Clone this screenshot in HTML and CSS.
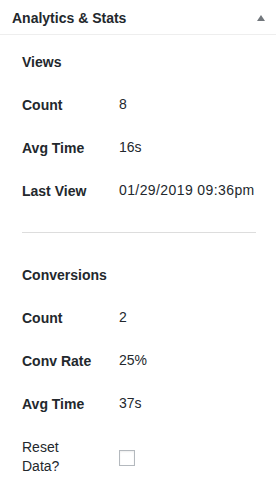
FILE: index.html
```html
<!DOCTYPE html>
<html>
<head>
<meta charset="utf-8">
<link rel="stylesheet" href="styles.css">
</head>
<body>
<div class="box">
  <div class="box-head">
    <h2 class="box-title">Analytics &amp; Stats</h2>
    <span class="toggle"></span>
  </div>
  <div class="box-body">
    <div class="row"><div class="section">Views</div></div>
    <div class="row"><div class="label">Count</div><div class="value">8</div></div>
    <div class="row"><div class="label">Avg Time</div><div class="value">16s</div></div>
    <div class="row"><div class="label">Last View</div><div class="value date">01/29/2019 09:36pm</div></div>
    <hr class="sep">
    <div class="row"><div class="section">Conversions</div></div>
    <div class="row"><div class="label">Count</div><div class="value">2</div></div>
    <div class="row"><div class="label">Conv Rate</div><div class="value">25%</div></div>
    <div class="row"><div class="label">Avg Time</div><div class="value">37s</div></div>
    <div class="row row-reset"><div class="label plain">Reset<br>Data?</div><div class="value"><span class="checkbox"></span></div></div>
  </div>
</div>
</body>
</html>
```

FILE: styles.css
```css
html, body {
  margin: 0;
  padding: 0;
  background: #fff;
}
body {
  font-family: "Liberation Sans", Arial, sans-serif;
  font-size: 14px;
  color: #23282d;
  width: 276px;
  height: 502px;
  overflow: hidden;
}
.box-head {
  height: 34px;
  border-bottom: 1px solid #eeeeee;
  display: flex;
  align-items: center;
  justify-content: space-between;
  padding: 0 12px 0 12px;
}
.box-title {
  margin: 0;
  font-size: 14px;
  font-weight: bold;
  line-height: 1;
  color: #23282d;
  position: relative;
  top: 1px;
}
.toggle {
  width: 0;
  height: 0;
  border-left: 4px solid transparent;
  border-right: 4px solid transparent;
  border-bottom: 6px solid #72777c;
  margin-right: -1px;
  position: relative;
  top: 1px;
}
.box-body {
  padding: 5px 20px 0 22px;
}
.row {
  display: flex;
  align-items: center;
  height: 43px;
}
.section, .label {
  font-weight: bold;
}
.label {
  width: 97px;
  flex: none;
}
.label.plain {
  font-weight: normal;
  line-height: 19px;
}
.value {
  line-height: 1.3;
}
.date {
  letter-spacing: 0.4px;
}
.sep {
  margin: 20px 0 20px 0;
  border: 0;
  border-top: 1px solid #dddddd;
  height: 0;
}
.row-reset {
  height: 64px;
}
.checkbox {
  display: block;
  width: 14px;
  height: 14px;
  border: 1px solid #b4b9be;
  background: #fff;
  box-shadow: inset 0 1px 2px rgba(0,0,0,0.07);
  position: relative;
  top: 1px;
}
```
